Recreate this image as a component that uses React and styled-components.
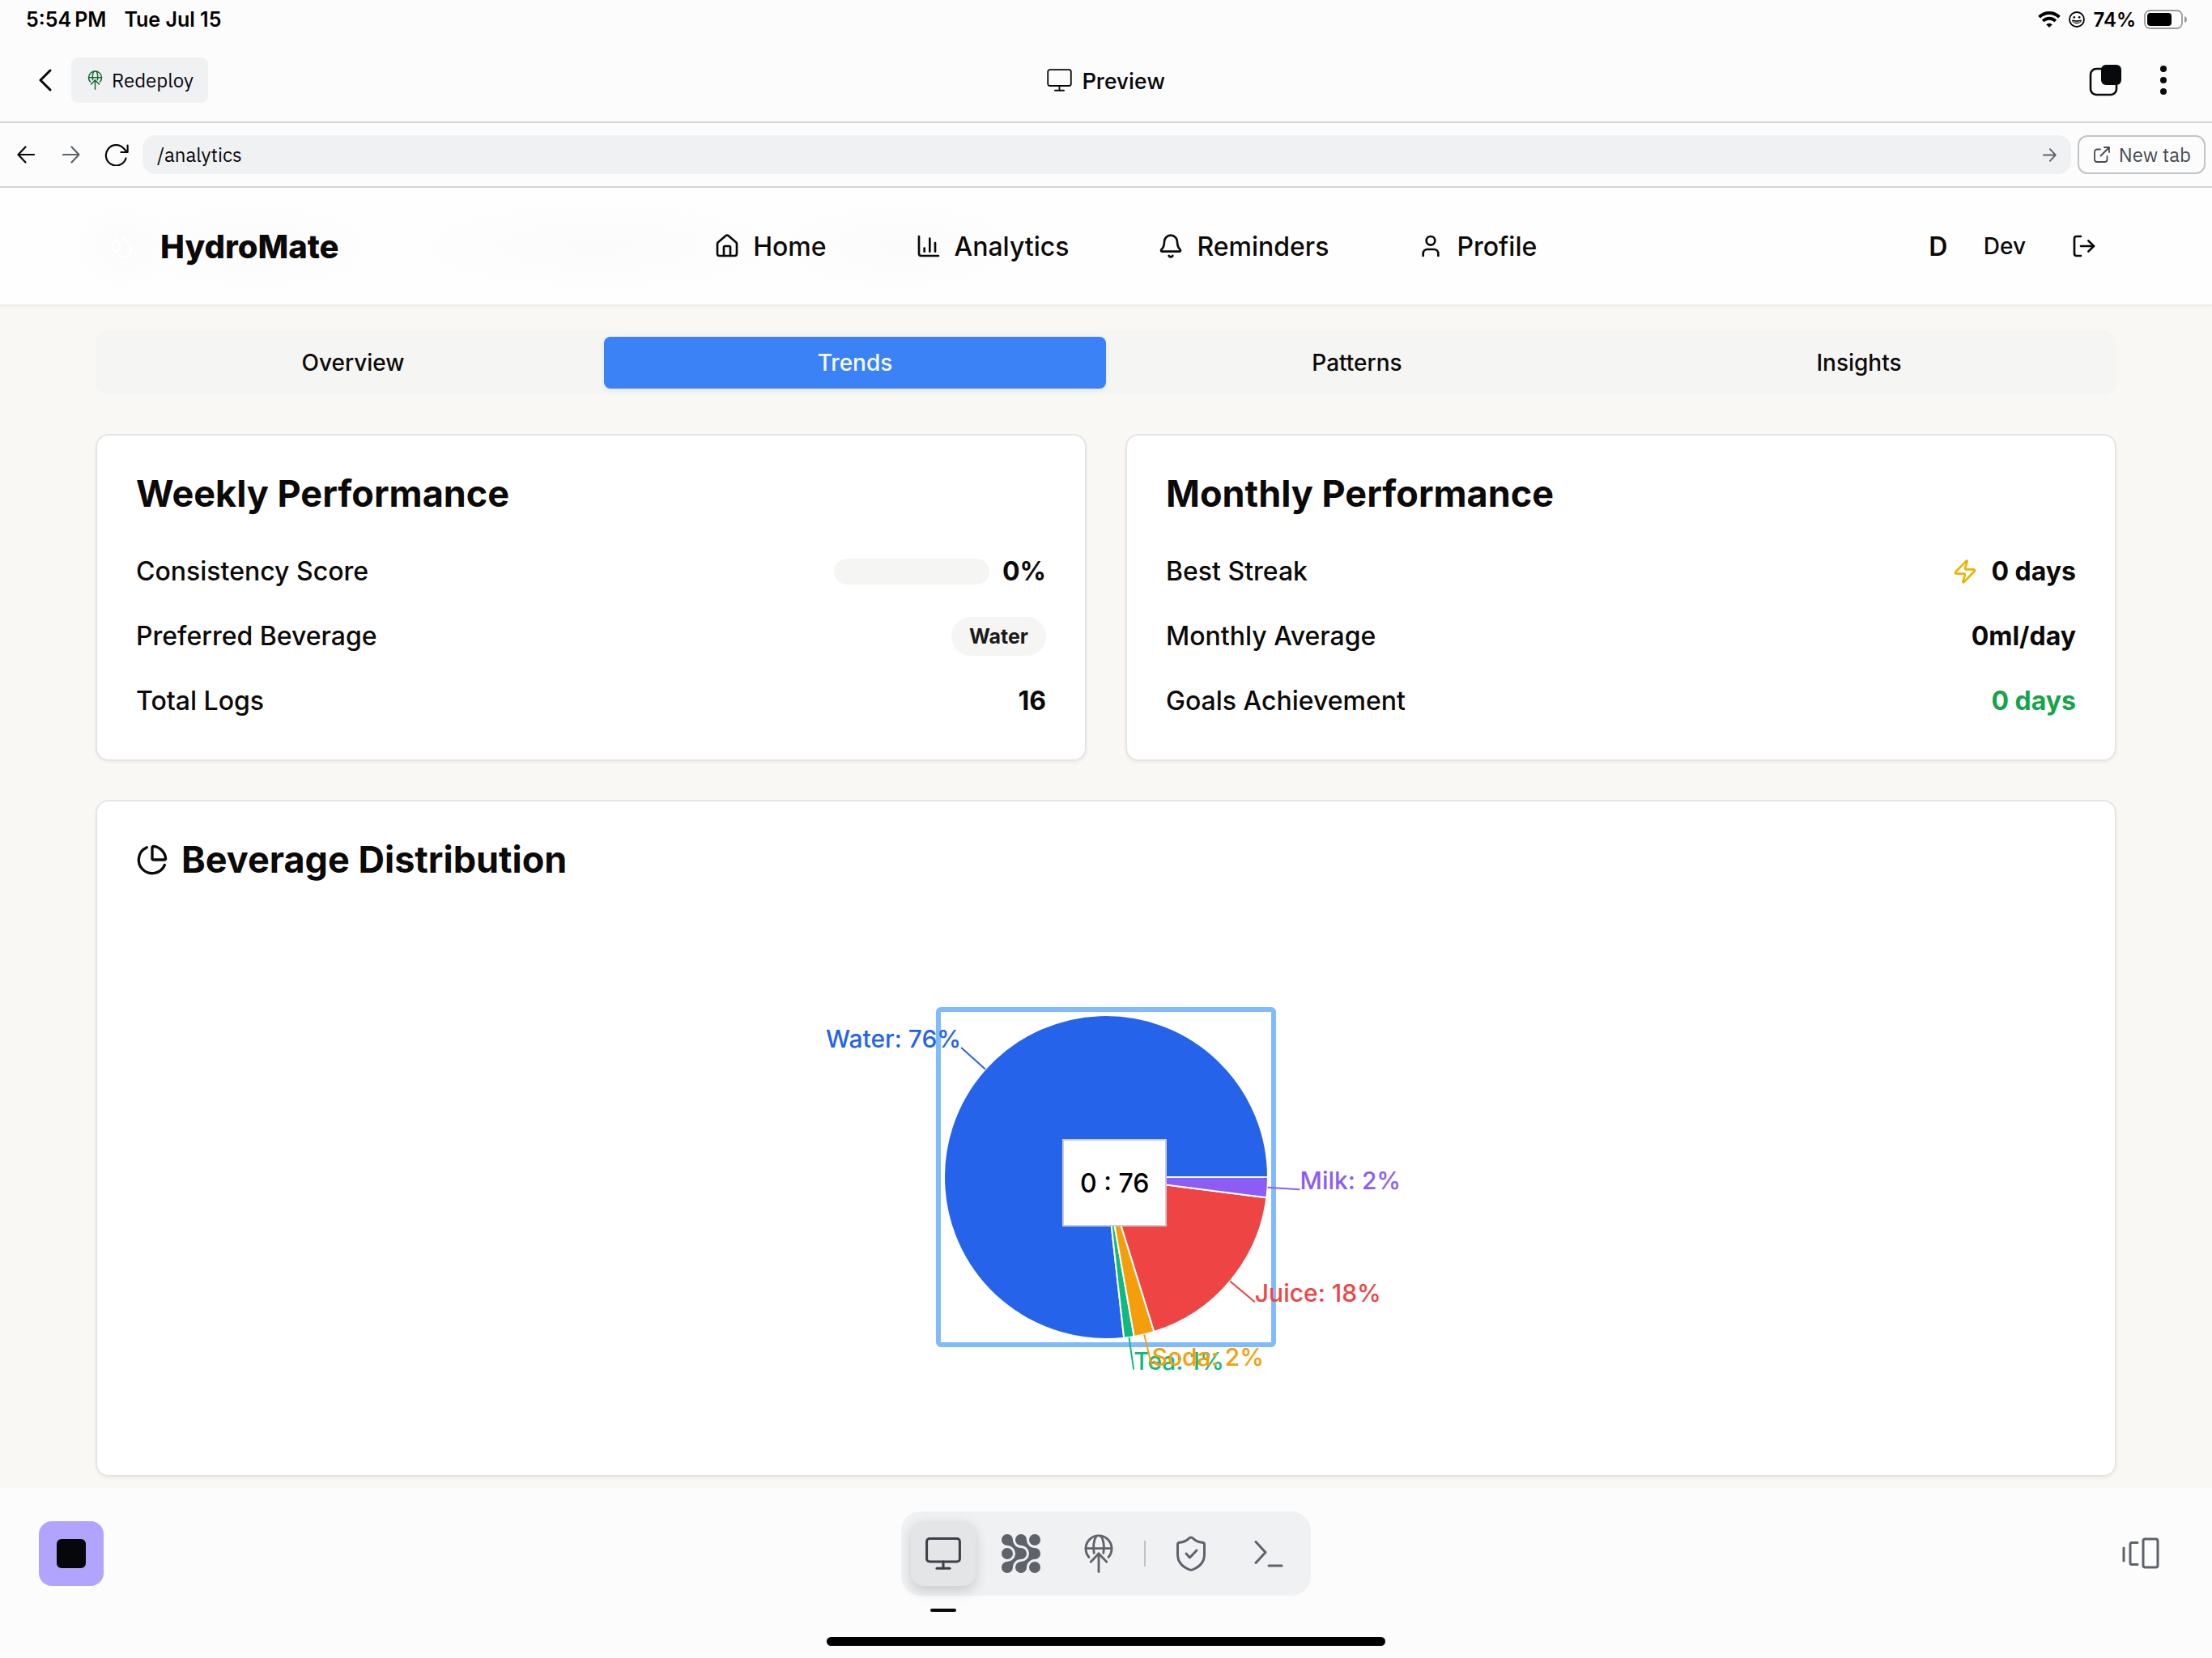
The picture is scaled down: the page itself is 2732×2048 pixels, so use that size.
import React, { useState } from "react";
import styled, { createGlobalStyle, css } from "styled-components";
import {
  House,
  ChartColumn,
  Bell,
  User,
  LogOut,
  ChartPie,
  Zap,
  Droplets,
} from "lucide-react";

const sans = `Inter, "Liberation Sans", sans-serif`;
const shellSans = `"IBM Plex Sans", Roboto, "Open Sans", sans-serif`;

const GlobalStyle = createGlobalStyle`
  *, *::before, *::after { box-sizing: border-box; }
  body { margin: 0; background: #fcfcfc; font-family: ${sans}; color: #0c0a09; }
  button, input { font: inherit; color: inherit; }
  button { cursor: pointer; }
  h1, h2, p, dl, dd { margin: 0; }
  svg { display: block; flex: none; }
`;

const bareButton = css`
  display: flex;
  align-items: center;
  justify-content: center;
  padding: 0;
  border: 0;
  background: none;
`;

/* ---------- device shell ---------- */

const Screen = styled.div`
  display: flex;
  flex-direction: column;
  min-height: 100vh;
  background: #fcfcfc;
`;

const StatusBar = styled.div`
  display: flex;
  align-items: center;
  justify-content: space-between;
  height: 48px;
  padding: 0 30px 0 32px;
  font-weight: 600;
  color: #000;
`;

const StatusGroup = styled.div`
  display: flex;
  align-items: center;
  gap: ${(p) => p.$gap}px;
  font-size: ${(p) => p.$size}px;
`;

const TopBar = styled.header`
  display: grid;
  grid-template-columns: 1fr auto 1fr;
  align-items: center;
  height: 104px;
  padding: 0 24px;
  border-bottom: 2px solid #d4d4d4;
  font-family: ${shellSans};
  color: #07090c;
`;

const BarSide = styled.div`
  display: flex;
  align-items: center;
  justify-content: ${(p) => (p.$end ? "flex-end" : "flex-start")};
`;

const IconButton = styled.button`
  ${bareButton}
  width: ${(p) => p.$width}px;
  height: 64px;
  color: ${(p) => (p.$muted ? "#5f626b" : "#07090c")};
`;

const RedeployButton = styled.button`
  ${bareButton}
  gap: 11px;
  height: 56px;
  padding: 0 18px 0 20px;
  border-radius: 8px;
  background: #f0f1f3;
  font-size: 24px;
`;

const BarTitle = styled.h1`
  display: flex;
  align-items: center;
  gap: 12px;
  font-size: 28px;
  font-weight: 500;
`;

const AddressBar = styled.form`
  display: flex;
  align-items: center;
  height: 80px;
  padding: 0 8px 0 4px;
  border-bottom: 2px solid #d4d4d4;
  font-family: ${shellSans};
  font-size: 24px;
  color: #07090c;
`;

const AddressField = styled.div`
  display: flex;
  flex: 1;
  align-items: center;
  height: 48px;
  margin: 0 8px 0 4px;
  border-radius: 16px;
  background: #f0f1f3;
`;

const AddressInput = styled.input`
  flex: 1;
  min-width: 0;
  height: 48px;
  padding: 0 18px;
  border: 0;
  outline: 0;
  background: none;
`;

const NewTabButton = styled.button`
  ${bareButton}
  gap: 11px;
  height: 48px;
  padding: 0 16px 0 18px;
  border: 2px solid #c0c5c5;
  border-radius: 12px;
  color: #484b54;
`;

/* ---------- previewed page ---------- */

const Page = styled.div`
  display: flex;
  flex: 1;
  flex-direction: column;
  background: #f9f8f4;
`;

const SiteHeader = styled.header`
  display: flex;
  align-items: center;
  justify-content: space-between;
  height: 146px;
  padding: 0 118px;
  border-bottom: 2px solid #efeeeb;
  background-color: #fefefe;
  background-image: radial-gradient(ellipse 60px 60px at 150px 72px, #fbfbfb, #fbfbfb00),
    radial-gradient(ellipse 170px 60px at 310px 72px, #fbfbfb, #fbfbfb00),
    radial-gradient(ellipse 250px 60px at 740px 72px, #fbfbfb, #fbfbfb00),
    radial-gradient(ellipse 160px 60px at 1110px 72px, #fbfbfb, #fbfbfb00);
  box-shadow: 0 2px 4px rgba(0, 0, 0, 0.03);
`;

const Brand = styled.a`
  display: flex;
  align-items: center;
  gap: 16px;
  font-size: 40px;
  font-weight: 800;
  color: #0c0a09;
  text-decoration: none;
`;

const BrandMark = styled.span`
  display: flex;
  align-items: center;
  justify-content: center;
  width: 64px;
  height: 64px;
  color: #fff;
`;

const SiteNav = styled.nav`
  display: flex;
  gap: 16px;
`;

const NavLink = styled.a`
  display: flex;
  align-items: center;
  gap: 16px;
  padding: 0 47px;
  font-size: 32px;
  font-weight: 500;
  color: #0c0a09;
  text-decoration: none;
`;

const Account = styled.div`
  display: flex;
  align-items: center;
  font-size: 28px;
  font-weight: 500;
`;

const Avatar = styled.span`
  width: 64px;
  margin-right: 24px;
  font-size: 32px;
  font-weight: 600;
  text-align: center;
`;

const LogoutButton = styled.button`
  ${bareButton}
  width: 80px;
  height: 64px;
  margin-left: 32px;
`;

const Content = styled.main`
  display: flex;
  flex-direction: column;
  gap: 48px;
  padding: 30px 118px 14px;
`;

const TabList = styled.div`
  display: grid;
  grid-template-columns: repeat(4, 1fr);
  padding: 8px;
  border-radius: 16px;
  background: #f5f5f4;
`;

const Tab = styled.button`
  height: 64px;
  padding: 0;
  border: 0;
  border-radius: 8px;
  font-size: 28px;
  font-weight: 500;
  color: ${(p) => (p.$active ? "#f8fafc" : "#0c0a09")};
  background: ${(p) => (p.$active ? "#3b82f6" : "transparent")};
  box-shadow: ${(p) => (p.$active ? "0 2px 6px rgba(0, 0, 0, 0.08)" : "none")};
`;

const CardGrid = styled.div`
  display: grid;
  grid-template-columns: 1fr 1fr;
  gap: 48px;
`;

const Card = styled.section`
  display: flex;
  flex-direction: column;
  gap: 48px;
  padding: 48px;
  border: 2px solid #e7e5e4;
  border-radius: 16px;
  background: #fff;
  box-shadow: 0 2px 4px rgba(0, 0, 0, 0.05);
`;

const CardTitle = styled.h2`
  display: flex;
  align-items: center;
  gap: 16px;
  font-size: 45px;
  line-height: 48px;
  font-weight: 700;
`;

const StatList = styled.dl`
  display: flex;
  flex-direction: column;
  gap: 32px;
  font-size: 32px;
  line-height: 48px;
`;

const StatRow = styled.div`
  display: flex;
  align-items: center;
  justify-content: space-between;
`;

const StatLabel = styled.dt`
  font-weight: 500;
`;

const StatValue = styled.dd`
  display: flex;
  align-items: center;
  gap: 16px;
  font-weight: 700;
  color: ${(p) => (p.$good ? "#16a34a" : "#0c0a09")};
`;

const Meter = styled.div`
  width: 192px;
  height: 32px;
  border-radius: 16px;
  overflow: hidden;
  background: #f5f5f4;
`;

const MeterFill = styled.div`
  height: 32px;
  background: #3b82f6;
`;

const Badge = styled.span`
  height: 48px;
  padding: 0 22px;
  border-radius: 24px;
  background: #f5f5f4;
  font-size: 25px;
  color: #1c1917;
`;

const ChartArea = styled.div`
  position: relative;
  display: flex;
  justify-content: center;
  height: 640px;
`;

const ChartSvg = styled.svg`
  overflow: visible;
  font-family: ${sans};
  font-size: 30px;
  font-weight: 500;
`;

const ChartTooltip = styled.div`
  position: absolute;
  top: 273px;
  left: calc(50% - 54px);
  padding: 29px 20px 27px;
  border: 2px solid #ccc;
  background: #fff;
  font-size: 32px;
  line-height: 48px;
  font-weight: 500;
  color: #000;
  white-space: nowrap;
`;

/* ---------- bottom dock ---------- */

const BottomBar = styled.footer`
  display: flex;
  flex-direction: column;
  align-items: center;
  gap: 51px;
  padding: 29px 48px 15px;
`;

const DockRow = styled.div`
  display: grid;
  grid-template-columns: 1fr auto 1fr;
  align-items: center;
  width: 100%;
`;

const StopButton = styled.button`
  ${bareButton}
  width: 80px;
  height: 80px;
  border-radius: 16px;
  background: #b1a4ff;
`;

const StopGlyph = styled.span`
  width: 36px;
  height: 36px;
  border-radius: 6px;
  background: #05070a;
`;

const Dock = styled.nav`
  display: flex;
  align-items: center;
  gap: 16px;
  padding: 12px;
  border-radius: 24px;
  background: #f0f1f3;
`;

const DockButton = styled.button`
  ${bareButton}
  position: relative;
  width: 80px;
  height: 80px;
  border-radius: 16px;
  color: #5f626b;
  ${(p) =>
    p.$active &&
    css`
      color: #3c3f48;
      background: #e4e5e7;
      box-shadow: 0 8px 16px rgba(0, 0, 0, 0.12), 0 0 16px rgba(0, 0, 0, 0.05);

      &::after {
        content: "";
        position: absolute;
        left: 24px;
        bottom: -32px;
        width: 32px;
        height: 4px;
        border-radius: 2px;
        background: #05070a;
      }
    `}
`;

const DockDivider = styled.span`
  width: 2px;
  height: 32px;
  background: #c0c2c7;
`;

const SideButton = styled.button`
  ${bareButton}
  justify-self: end;
  width: 80px;
  height: 80px;
  color: #5f626b;
`;

const HomeIndicator = styled.div`
  width: 690px;
  max-width: 100%;
  height: 11px;
  border-radius: 6px;
  background: #000;
`;

/* ---------- icons ---------- */

const Line = ({ w, h, box, sw = 3, children }) => (
  <svg
    width={w}
    height={h}
    viewBox={box || `0 0 ${w} ${h}`}
    fill="none"
    stroke="currentColor"
    strokeWidth={sw}
    strokeLinecap="round"
    strokeLinejoin="round"
    aria-hidden="true"
  >
    {children}
  </svg>
);

const WifiIcon = () => (
  <svg width="28" height="20" viewBox="0 0 28 20" fill="none" stroke="#000" aria-hidden="true">
    <path d="M1.6 7.2a17.6 17.6 0 0 1 24.8 0" strokeWidth="4" />
    <path d="M6.2 12a11 11 0 0 1 15.6 0" strokeWidth="3.8" />
    <path d="M10.2 16.2a5.4 5.4 0 0 1 7.6 0L14 20z" fill="#000" stroke="none" />
  </svg>
);

const SmileIcon = () => (
  <svg width="20" height="20" viewBox="0 0 20 20" fill="none" stroke="#000" aria-hidden="true">
    <circle cx="10" cy="10" r="9" strokeWidth="1.8" />
    <circle cx="6.8" cy="7.4" r="1.3" fill="#000" stroke="none" />
    <circle cx="13.2" cy="7.4" r="1.3" fill="#000" stroke="none" />
    <path d="M3.8 10.6q6.2 1.4 12.4 0a6.4 6.2 0 0 1-12.4 0z" fill="#000" stroke="none" />
    <path d="M5.6 12.8q4.4 1.2 8.8 0" stroke="#fff" strokeWidth="1" />
  </svg>
);

const BatteryIcon = () => (
  <svg width="54" height="24" viewBox="0 0 54 24" aria-hidden="true">
    <rect x="1" y="1" width="46" height="22" rx="6.5" fill="none" stroke="#9b9b9b" strokeWidth="1.8" />
    <rect x="4" y="4" width="30" height="16" rx="4" fill="#000" />
    <path d="M50 8q3 1 3 4t-3 4z" fill="#9b9b9b" />
  </svg>
);

const DeployIcon = ({ w = 48, h = 48, box = "0 0 48 48", sw }) => (
  <Line w={w} h={h} box={box} sw={sw}>
    <path d="M12 28.5a16 16 0 1 1 24 0" />
    <path d="M8 17.7h32" />
    <path d="M21 2.4c-3.4 6-4 14-2.8 21" />
    <path d="M27 2.4c3.4 6 4 14 2.8 21" />
    <path d="M24 24v22.5" />
    <path d="M14.2 34.2 24 24l9.8 10.2" />
  </Line>
);

const GreenIcon = styled.span`
  color: #14662a;
`;

const MonitorIcon = ({ small }) => (
  <Line w={small ? 31 : 44} h={small ? 28 : 40} box="0 0 44 40" sw={small ? 2.6 : 3}>
    <rect x="1.6" y="1.6" width="40.8" height="28.4" rx="3.5" />
    <path d="M22 30v8" />
    <path d="M14 38.2h16" />
  </Line>
);

const AgentIcon = () => {
  const blob =
    "M7 14A10 10 0 0 1 7 34A7 7 0 1 0 14 41C14 36 18 31 24 31A7 7 0 0 0 24 17C18 17 14 12 14 7A7 7 0 1 0 7 14Z";
  return (
    <svg width="48" height="48" viewBox="0 0 48 48" fill="currentColor" aria-hidden="true">
      <path d={blob} />
      <path d={blob} transform="translate(17 0)" />
      <circle cx="7" cy="24" r="7" />
      <circle cx="41" cy="7" r="7" />
      <circle cx="41" cy="41" r="7" />
    </svg>
  );
};

const ArrowIcon = ({ size, flip, sw = 2.2 }) => (
  <Line w={size} h={size} box="0 0 22 22" sw={sw}>
    {flip ? <path d="M21 11H1.5M10.5 1.5 1.5 11l9 9.5" /> : <path d="M1 11h19.5M11.5 1.5l9 9.5-9 9.5" />}
  </Line>
);

/* ---------- data ---------- */

const navItems = [
  { label: "Home", Icon: House },
  { label: "Analytics", Icon: ChartColumn },
  { label: "Reminders", Icon: Bell },
  { label: "Profile", Icon: User },
];

const tabs = ["Overview", "Trends", "Patterns", "Insights"];

const beverages = [
  { name: "Water", value: 76, color: "#2563eb" },
  { name: "Tea", value: 1, color: "#10b981" },
  { name: "Soda", value: 2, color: "#f59e0b" },
  { name: "Juice", value: 18, color: "#ef4444" },
  { name: "Milk", value: 2, color: "#8b5cf6" },
];

const RADIUS = 200;
const LABEL_RADIUS = 240;

const point = (angle, r) => [
  r * Math.cos((angle * Math.PI) / 180),
  -r * Math.sin((angle * Math.PI) / 180),
];

const total = beverages.reduce((sum, b) => sum + b.value, 0);
let cursor = 0;
const slices = beverages.map((b) => {
  const start = cursor;
  const end = start + (b.value / total) * 360;
  cursor = end;
  const mid = (start + end) / 2;
  return {
    ...b,
    from: point(start, RADIUS),
    to: point(end, RADIUS),
    large: end - start > 180 ? 1 : 0,
    edge: point(mid, RADIUS),
    tip: point(mid, LABEL_RADIUS),
  };
});

const BeveragePie = () => (
  <ChartSvg width="840" height="640" viewBox="-420 -320 840 640" role="img" aria-label="Beverage distribution">
    {slices.map((s) => (
      <path
        key={s.name}
        d={`M0 0L${s.from.join(" ")}A${RADIUS} ${RADIUS} 0 ${s.large} 0 ${s.to.join(" ")}Z`}
        fill={s.color}
        stroke="#fff"
        strokeWidth="2"
      />
    ))}
    <rect x="-207" y="-207" width="414" height="414" rx="3" fill="none" stroke="#80bbff" strokeWidth="6" />
    {slices.map((s) => (
      <g key={s.name}>
        <path d={`M${s.edge.join(" ")}L${s.tip.join(" ")}`} stroke={s.color} strokeWidth="2" />
        <text x={s.tip[0]} y={s.tip[1]} fill={s.color} textAnchor={s.tip[0] < 0 ? "end" : "start"}>
          {`${s.name}: ${s.value}%`}
        </text>
      </g>
    ))}
  </ChartSvg>
);

const Stat = ({ label, good, children }) => (
  <StatRow>
    <StatLabel>{label}</StatLabel>
    <StatValue $good={good}>{children}</StatValue>
  </StatRow>
);

export default function App() {
  const [tab, setTab] = useState("Trends");
  const [path, setPath] = useState("/analytics");
  const consistency = 0;

  return (
    <Screen>
      <GlobalStyle />
      <StatusBar>
        <StatusGroup $gap={22} $size={25}>
          <span>5:54&#8201;PM</span>
          <span>Tue Jul 15</span>
        </StatusGroup>
        <StatusGroup $gap={10} $size={24}>
          <WifiIcon />
          <SmileIcon />
          <span>74%</span>
          <BatteryIcon />
        </StatusGroup>
      </StatusBar>

      <TopBar>
        <BarSide>
          <IconButton $width={64} aria-label="Back">
            <Line w={16} h={28} sw={3}>
              <path d="M14 2 2 14l12 12" />
            </Line>
          </IconButton>
          <RedeployButton>
            <GreenIcon>
              <DeployIcon w={19} h={24} box="6 0 36 48" sw={3} />
            </GreenIcon>
            Redeploy
          </RedeployButton>
        </BarSide>
        <BarTitle>
          <MonitorIcon small />
          Preview
        </BarTitle>
        <BarSide $end>
          <IconButton $width={72} aria-label="Windows">
            <svg width="40" height="40" viewBox="0 0 40 40" aria-hidden="true">
              <rect x="2" y="6" width="32" height="32" rx="7" fill="none" stroke="currentColor" strokeWidth="2.6" />
              <rect x="15" y="1" width="25" height="25" rx="6" fill="currentColor" />
            </svg>
          </IconButton>
          <IconButton $width={72} aria-label="More">
            <svg width="8" height="36" viewBox="0 0 8 36" fill="currentColor" aria-hidden="true">
              <circle cx="4" cy="4" r="4" />
              <circle cx="4" cy="18" r="4" />
              <circle cx="4" cy="32" r="4" />
            </svg>
          </IconButton>
        </BarSide>
      </TopBar>

      <AddressBar onSubmit={(e) => e.preventDefault()}>
        <IconButton type="button" $width={56} aria-label="Go back">
          <ArrowIcon size={22} flip />
        </IconButton>
        <IconButton type="button" $width={56} $muted aria-label="Go forward">
          <ArrowIcon size={22} />
        </IconButton>
        <IconButton type="button" $width={56} aria-label="Reload">
          <Line w={30} h={28} sw={2.2}>
            <path d="M26.5 18.5A12.6 12.6 0 1 1 24 6.6L28 11" />
            <path d="M28.6 2.6V11H20.4" />
          </Line>
        </IconButton>
        <AddressField>
          <AddressInput aria-label="Path" value={path} onChange={(e) => setPath(e.target.value)} />
          <IconButton $width={52} $muted aria-label="Open path">
            <ArrowIcon size={17} sw={2.4} />
          </IconButton>
        </AddressField>
        <NewTabButton type="button">
          <Line w={20} h={20} sw={1.8}>
            <path d="M8 3.5H4a3 3 0 0 0-3 3V16a3 3 0 0 0 3 3h9.5a3 3 0 0 0 3-3v-4" />
            <path d="M8.5 11.5 19 1M13 1h6v6" />
          </Line>
          New tab
        </NewTabButton>
      </AddressBar>

      <Page>
        <SiteHeader>
          <Brand href="#home">
            <BrandMark>
              <Droplets size={32} />
            </BrandMark>
            HydroMate
          </Brand>
          <SiteNav>
            {navItems.map(({ label, Icon }) => (
              <NavLink key={label} href={`#${label.toLowerCase()}`}>
                <Icon size={32} />
                {label}
              </NavLink>
            ))}
          </SiteNav>
          <Account>
            <Avatar>D</Avatar>
            Dev
            <LogoutButton aria-label="Log out">
              <LogOut size={32} />
            </LogoutButton>
          </Account>
        </SiteHeader>

        <Content>
          <TabList role="tablist">
            {tabs.map((name) => (
              <Tab
                key={name}
                role="tab"
                aria-selected={tab === name}
                $active={tab === name}
                onClick={() => setTab(name)}
              >
                {name}
              </Tab>
            ))}
          </TabList>

          <CardGrid>
            <Card>
              <CardTitle>Weekly Performance</CardTitle>
              <StatList>
                <Stat label="Consistency Score">
                  <Meter role="progressbar" aria-label="Consistency Score" aria-valuenow={consistency}>
                    <MeterFill style={{ width: `${consistency}%` }} />
                  </Meter>
                  {consistency}%
                </Stat>
                <Stat label="Preferred Beverage">
                  <Badge>Water</Badge>
                </Stat>
                <Stat label="Total Logs">16</Stat>
              </StatList>
            </Card>
            <Card>
              <CardTitle>Monthly Performance</CardTitle>
              <StatList>
                <Stat label="Best Streak">
                  <Zap size={32} color="#eab308" />0 days
                </Stat>
                <Stat label="Monthly Average">0ml/day</Stat>
                <Stat label="Goals Achievement" good>
                  0 days
                </Stat>
              </StatList>
            </Card>
          </CardGrid>

          <Card>
            <CardTitle>
              <ChartPie size={40} />
              Beverage Distribution
            </CardTitle>
            <ChartArea>
              <BeveragePie />
              <ChartTooltip role="status">0 : 76</ChartTooltip>
            </ChartArea>
          </Card>
        </Content>
      </Page>

      <BottomBar>
        <DockRow>
          <StopButton aria-label="Stop">
            <StopGlyph />
          </StopButton>
          <Dock aria-label="Tools">
            <DockButton $active aria-label="Preview">
              <MonitorIcon />
            </DockButton>
            <DockButton aria-label="Agent">
              <AgentIcon />
            </DockButton>
            <DockButton aria-label="Deployments">
              <DeployIcon sw={2.8} />
            </DockButton>
            <DockDivider />
            <DockButton aria-label="Security">
              <Line w={36} h={44} sw={3}>
                <path d="M18 2c1 0 2 .8 3 1.7 3 2.8 6.5 4.2 10.5 4.5 1.8.1 3 .8 3 2.4V23c0 9-6 15.500-14.5 18.8-1.500.5-2.500.5-4 0C7.500 38.500 1.500 32 1.500 23V10.600c0-1.600 1.200-2.300 3-2.400C8.500 7.900 12 6.500 15 3.700 16 2.800 17 2 18 2z" />
                <path d="m12 22 4.5 5 8.500-9" />
              </Line>
            </DockButton>
            <DockButton aria-label="Shell">
              <Line w={36} h={34} sw={3}>
                <path d="M2 2.5 14 15.500 2 28.500" />
                <path d="M18 32h16" />
              </Line>
            </DockButton>
          </Dock>
          <SideButton aria-label="Switch panes">
            <Line w={46} h={40} sw={3}>
              <path d="M2 13v16" />
              <path d="M19 6.5h-7a2 2 0 0 0-2 2v23a2 2 0 0 0 2 2h7" />
              <rect x="26" y="2" width="18" height="35" rx="2.5" />
            </Line>
          </SideButton>
        </DockRow>
        <HomeIndicator />
      </BottomBar>
    </Screen>
  );
}
